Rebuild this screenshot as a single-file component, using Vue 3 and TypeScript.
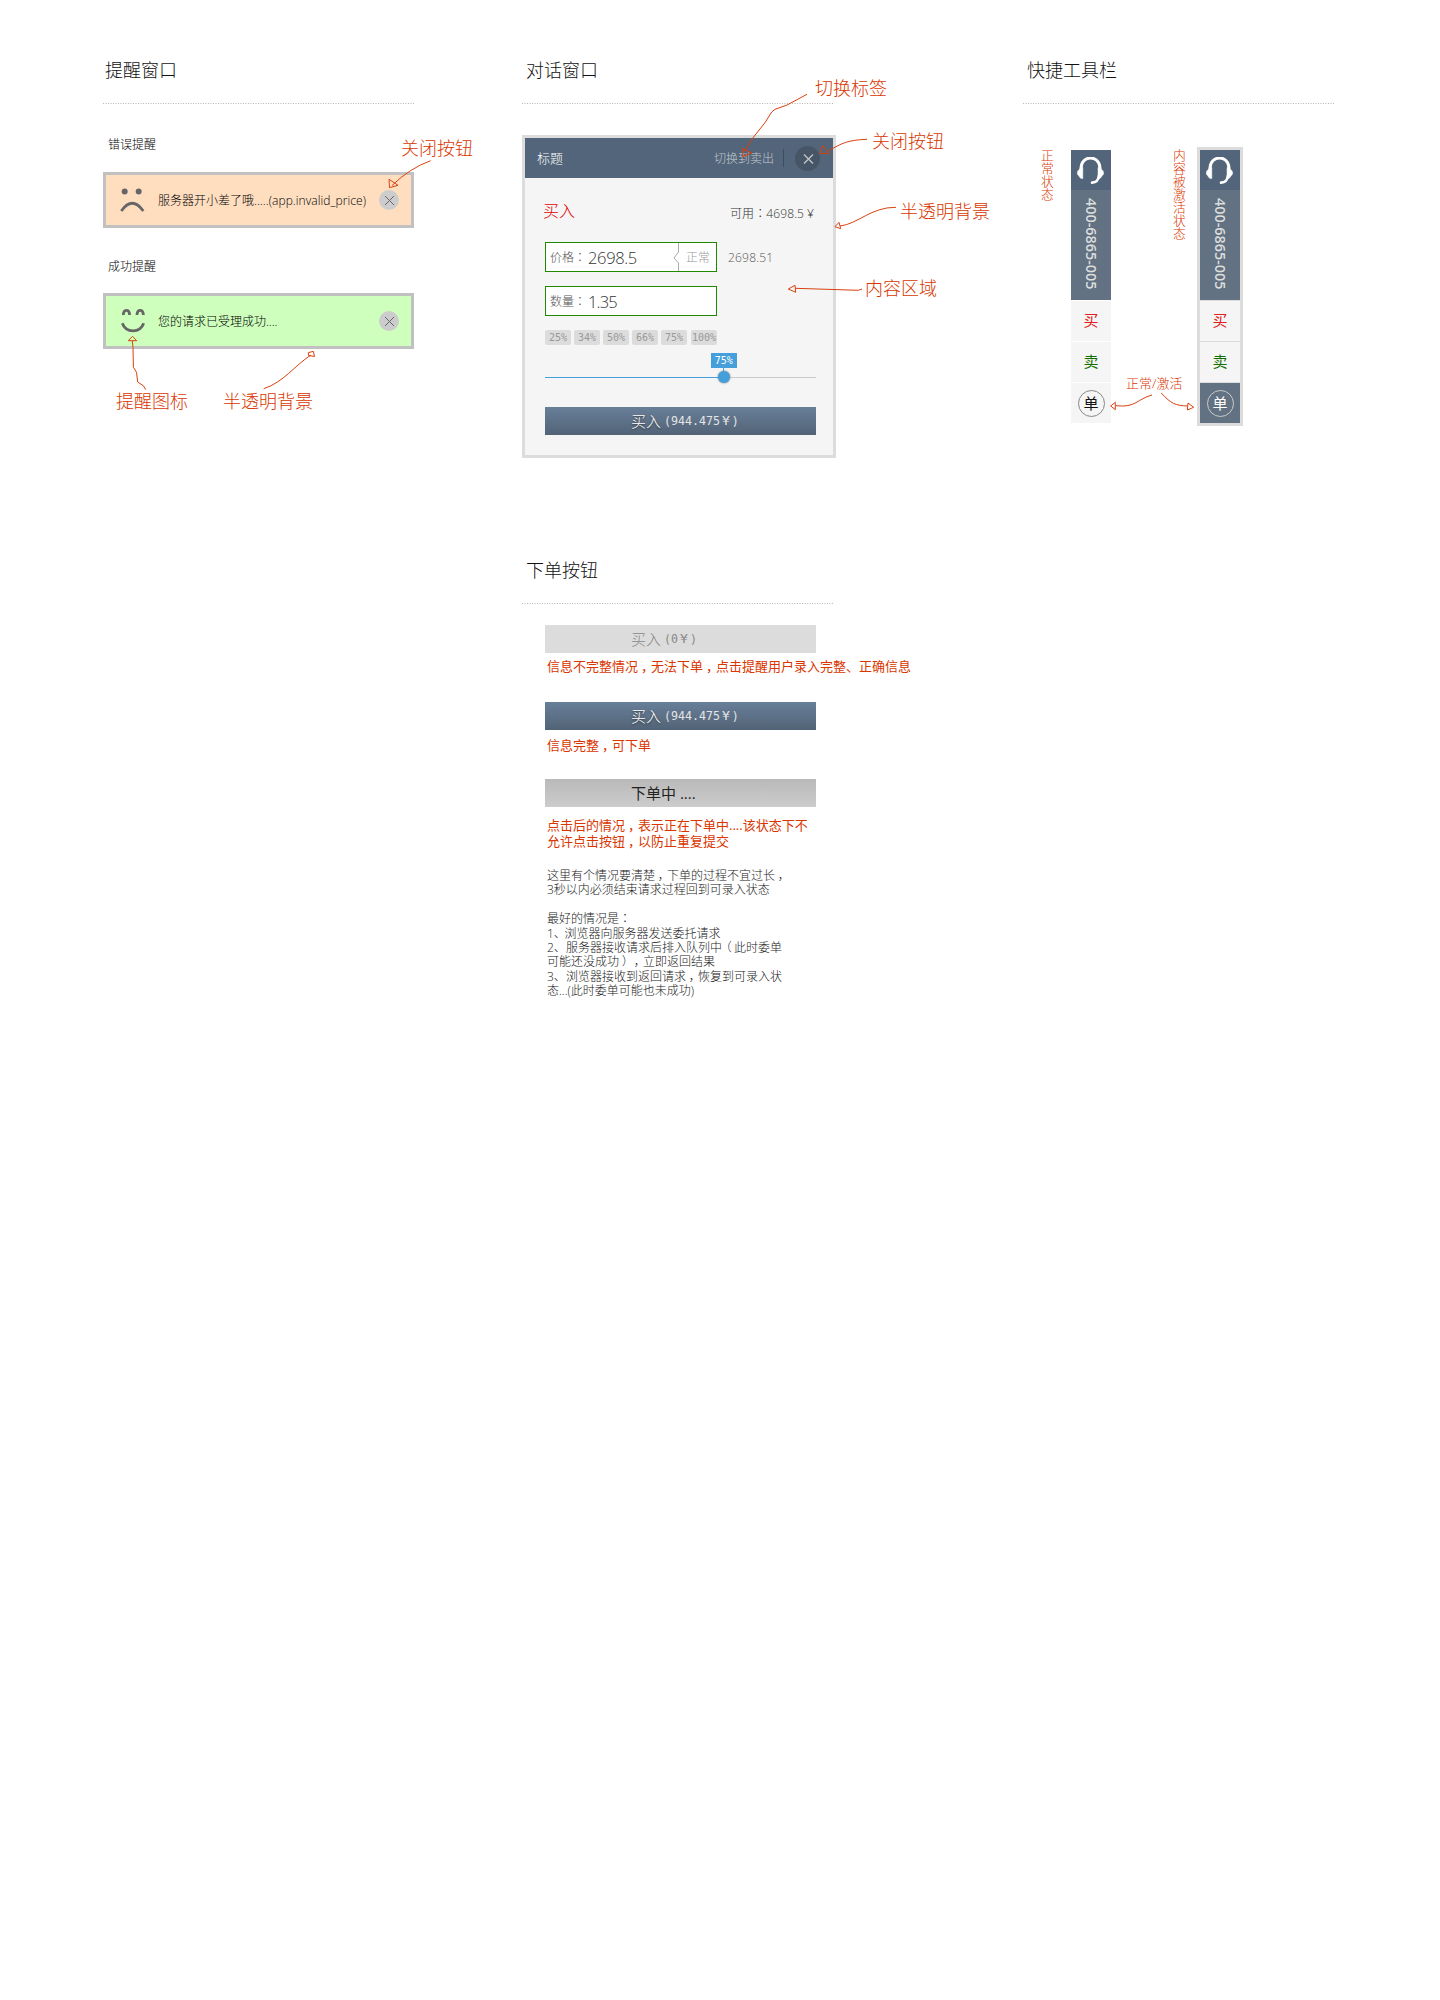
<script setup lang="ts">
interface Label { text: string; x: number; y: number; small?: boolean; vertical?: boolean }

const chips: string[] = ['25%', '34%', '50%', '66%', '75%', '100%']
const percent = 66

const labels: Label[] = [
  { text: '关闭按钮', x: 401, y: 148 },
  { text: '提醒图标', x: 116, y: 401 },
  { text: '半透明背景', x: 223, y: 401 },
  { text: '切换标签', x: 815, y: 88 },
  { text: '关闭按钮', x: 872, y: 141 },
  { text: '半透明背景', x: 900, y: 211 },
  { text: '内容区域', x: 865, y: 288 },
  { text: '正常/激活', x: 1126, y: 383, small: true },
  { text: '正常状态', x: 1041, y: 149, vertical: true },
  { text: '内容被激活状态', x: 1173, y: 149, vertical: true },
]

const arrows: string[] = [
  'M430.7 160.7Q410 168 392 185.5M389 179.3L398 185.3L389.5 187.6Z',
  'M145.7 389.7L143.3 385.7L137.7 382L136.5 372.3L133.4 367.3L133 347.3L132.3 341M132.5 336.3L136.7 340.7H128.3Z',
  'M263.7 388.7C284 382 294 366 311 355M308.3 352.7L313.3 351.3L314.5 356.5L308.5 355.5Z',
  'M807 94.3L786.7 105.2L775 109.3L771.7 112L765 122.7L753.3 137.3L744 151.7M742.3 148.3L751.7 153L742.7 156.7Z',
  'M867 139.3C848 140 842 143 828.3 151M822.7 145.5L829 153.5L819.7 153.3Z',
  'M896 207.3C871 207 858 224 840 226M835 226.7L839 222.3L840.7 228.7Z',
  'M862 289L858.3 290.3L795.3 288.3M788.3 289L795 285.3L795.7 292.3Z',
  'M1152 395C1137 399 1136 408 1116 405.7M1110.7 406L1115.3 402.3V409.7Z',
  'M1161.3 393C1171 404 1176 405.5 1187.3 406M1193.7 407.3L1188 403L1187.3 410Z',
]
</script>

<template>
  <main class="board">
    <section class="panel alerts">
      <h2>提醒窗口</h2>
      <h3>错误提醒</h3>
      <div class="alert error">
        <svg class="face" width="26" height="26" viewBox="0 0 26 26">
          <circle cx="4.7" cy="4.6" r="3" /><circle cx="18.7" cy="4.6" r="3" />
          <path d="M1.3 24Q12.2 8.5 23.3 24" />
        </svg>
        <span>服务器开小差了哦<i class="err">.....(app.invalid_price)</i></span>
        <button class="close"><svg width="20" height="20"><path d="M6 6L15 15M15 6L6 15" /></svg></button>
      </div>
      <h3 class="second">成功提醒</h3>
      <div class="alert ok">
        <svg class="face" width="26" height="26" viewBox="0 0 26 26">
          <path d="M3.3 7C3.5 0.8 9.3 0.8 9.6 7M17 7C17.3 0.8 23 0.8 23.4 7M2.3 15.3Q5 22.8 13 22.8T23.7 15.3" />
        </svg>
        <span>您的请求已受理成功....</span>
        <button class="close"><svg width="20" height="20"><path d="M6 6L15 15M15 6L6 15" /></svg></button>
      </div>
    </section>

    <div class="middle">
      <section class="panel dialogs">
        <h2>对话窗口</h2>
        <div class="dialog">
          <header>
            <b>标题</b><span class="switch">切换到卖出</span><i class="sep"></i>
            <button class="round"><svg width="25" height="25"><path d="M9 8.5L18 17.5M18 8.5L9 17.5" /></svg></button>
          </header>
          <div class="content">
            <div class="summary"><strong>买入</strong><span>可用<i class="mid">：</i>4698.5<i class="yen">¥</i></span></div>
            <div class="row">
              <div class="field">
                <label>价格<i class="mid">：</i></label><em>2698.5</em>
                <svg width="7" height="28"><path d="M5.5 0V9L1 15L5.5 20V28" /></svg>
                <span class="mode">正常</span>
              </div>
              <span class="hint">2698.51</span>
            </div>
            <div class="row qty"><div class="field"><label>数量<i class="mid">：</i></label><em class="tight">1.35</em></div></div>
            <div class="chips"><span v-for="c in chips" :key="c">{{ c }}</span></div>
            <div class="slider">
              <div class="fill" :style="{ width: percent + '%' }"></div>
              <div class="thumb" :style="{ left: percent + '%' }"><span>75%</span></div>
            </div>
            <div class="order primary"><span>买入</span><code>(944.475<i>¥</i>)</code></div>
          </div>
        </div>
      </section>

      <section class="panel states">
        <h2>下单按钮</h2>
        <div class="order disabled"><span>买入</span><code>(0<i>¥</i>)</code></div>
        <p class="note">信息不完整情况<i class="low">，</i>无法下单<i class="low">，</i>点击提醒用户录入完整、正确信息</p>
        <div class="order primary"><span>买入</span><code>(944.475<i>¥</i>)</code></div>
        <p class="note single">信息完整<i class="low">，</i>可下单</p>
        <div class="order pending"><span>下单中 ....</span></div>
        <p class="note two">点击后的情况<i class="low">，</i>表示正在下单中....该状态下不<br>允许点击按钮<i class="low">，</i>以防止重复提交</p>
        <p class="desc">这里有个情况要清楚<i class="low">，</i>下单的过程不宜过长<i class="low">，</i><br>3秒以内必须结束请求过程回到可录入状态<br><br>最好的情况是<i class="mid">：</i><br><i class="num one">1、</i>浏览器向服务器发送委托请求<br><i class="num">2、</i>服务器接收请求后排入队列中<i class="open">（</i>此时委单<br>可能还没成功<i class="low">）</i><i class="low">，</i>立即返回结果<br><i class="num">3、</i>浏览器接收到返回请求<i class="low">，</i>恢复到可录入状<br>态...(此时委单可能也未成功)</p>
      </section>
    </div>

    <section class="panel tools">
      <h2>快捷工具栏</h2>
      <div class="bars">
        <div v-for="n in 2" :key="n" class="bar" :class="{ active: n === 2 }">
          <div class="head">
            <svg width="28" height="28" viewBox="0 0 28 28">
              <path class="arc" d="M4 12.5V11C4.5 -2.3 22.5 -2.3 23 11V12.5" />
              <path class="cup" d="M5.8 10.6V21.5H4.4C2.8 21.5 2.4 19 .8 17.8Q-.2 16 .8 14C2.4 12.6 2.8 11 4.4 10.7ZM21 10.6V21.5H22.5C24 21.5 24.5 19 26.1 17.8Q27.1 16 26.1 14C24.5 12.6 24 11 22.5 10.7Z" />
              <path class="mic" d="M21.8 19C21.5 23 19.5 25.3 15 25.6" />
            </svg>
          </div>
          <div class="phone"><span>400-6865-005</span></div>
          <div class="cell buy">买</div>
          <div class="cell sell">卖</div>
          <div class="cell list"><span>单</span></div>
        </div>
      </div>
    </section>

    <div class="marks">
      <svg width="1440" height="480"><path v-for="(d, i) in arrows" :key="i" :d="d" /></svg>
      <span v-for="(l, i) in labels" :key="i" :class="{ small: l.small, vertical: l.vertical }" :style="{ left: l.x + 'px', top: l.y + 'px' }">{{ l.text }}</span>
    </div>
  </main>
</template>

<style>
body { margin: 0; background: #fff; }
</style>

<style scoped>
* { box-sizing: border-box; }
.board {
  position: relative; display: flex; align-items: flex-start; width: 1440px; height: 2000px; padding-left: 103px; overflow: hidden;
  font-family: "Open Sans", "Noto Sans CJK SC", sans-serif; font-weight: 300; font-size: 12px; color: #222;
  text-spacing-trim: space-all;
}
h2, h3, p { margin: 0; font-weight: 300; }
i, em { font-style: normal; }
button { padding: 0; border: 0; display: block; }
svg { display: block; flex: none; }
.mid { font-family: "Noto Sans CJK TC", sans-serif; line-height: 1; }
.low, .open { display: inline-block; width: 1em; line-height: 1; text-indent: .22em; white-space: nowrap; }
.open { text-indent: -.2em; }
h2 {
  width: 311px; height: 104px; padding: 55px 0 0 2px; font-size: 18px; line-height: 30px; color: #111;
  background: repeating-linear-gradient(90deg, #b8b8b8 0 1px, #fff 1px 2px, #d8d8d8 2px 4px, #fff 4px 5px) 0 100% / 100% 1px no-repeat;
}
.middle h2, .tools h2 { padding-left: 4px; }
.middle { margin-left: 108px; width: 501px; }
.alerts h3 { margin-top: 31px; padding-left: 5px; font-size: 12px; line-height: 20px; color: #000; }
.alerts h3.second { margin-top: 29px; }
.alert { display: flex; align-items: center; width: 311px; height: 56px; margin-top: 17px; border: 3px solid #c1c1c1; padding: 0 12px 0 14px; color: #000; }
.alerts .second + .alert { margin-top: 16px; }
.error { background: #ffdec0; }
.ok { background: #ceffbc; }
.alert span { margin-left: 12px; flex: 1; white-space: nowrap; }
.err { letter-spacing: .07px; }
.face { fill: #666; }
.face path { fill: none; stroke: #666; stroke-width: 2.8; }
.close { width: 20px; height: 20px; border-radius: 50%; background: #ccc; }
.close path { stroke: #666; fill: none; }

.dialogs { height: 500px; }
.dialog { width: 314px; height: 323px; margin-top: 31px; border: 3px solid #dcdcdc; background: #f5f5f5; }
.dialog header { display: flex; align-items: center; height: 40px; padding: 0 13px 0 12px; background: #52657a; color: #c3c8cd; }
.dialog b { font-weight: 300; font-size: 13px; color: #fff; flex: 1; padding-bottom: 1px; }
.sep { width: 1px; height: 18px; margin: 0 11px 0 9px; background: #414d59; }
.round { width: 25px; height: 25px; border-radius: 50%; background: #475666; }
.round path { stroke: #bfc4c8; stroke-width: 1.4; }
.content { padding: 19px 17px 0 20px; }
.summary { display: flex; justify-content: space-between; height: 45px; }
.summary strong { margin-left: -2px; font-size: 16px; line-height: 28px; font-weight: 300; color: #e00000; }
.summary span { line-height: 33px; color: #333; margin-right: 2px; letter-spacing: .1px; }
.yen { margin-left: 3px; }
.row { display: flex; align-items: center; }
.field { display: flex; align-items: center; width: 172px; height: 30px; padding-left: 4px; border: 1px solid #1f8a00; background: #fff; }
.field label { width: 38px; white-space: nowrap; color: #555; }
.field em { width: 85px; padding-top: 2px; font-size: 16.5px; letter-spacing: -.35px; color: #333; line-height: 28px; }
.field .tight { letter-spacing: -.8px; }
.field svg path { fill: none; stroke: #aaa; }
.mode { margin-left: 6px; color: #999; }
.hint { margin-left: 11px; color: #555; letter-spacing: .2px; }
.qty { margin-top: 14px; }
.chips { display: flex; gap: 3px; margin-top: 14px; }
.chips span { width: 26px; height: 15px; border-radius: 2px; background: #dcdcdc; font: 400 10px/15px "DejaVu Sans Mono", monospace; color: #999; text-align: center; }
.chips span:last-child { margin-left: 1px; }
.slider { position: relative; width: 271px; height: 1px; margin-top: 32px; background: #ccc; }
.fill { height: 1px; background: #459fdb; }
.thumb { position: absolute; top: -6px; width: 12px; height: 12px; margin-left: -6px; border-radius: 50%; background: #459fdb; box-shadow: 0 0 2px #666; }
.thumb::before { content: ""; position: absolute; left: 5px; top: -4px; width: 1px; height: 5px; background: #459fdb; }
.thumb span { position: absolute; left: -7px; top: -18px; width: 26px; height: 15px; background: #459fdb; color: #fff; font: 400 10px/15px "DejaVu Sans Mono", monospace; text-align: center; }
.order { display: flex; align-items: center; width: 271px; height: 28px; padding-left: 86px; font-size: 15px; line-height: 28px; }
.order span { margin-top: -1px; }
.order code { margin-left: 3px; font: 400 11.6px/28px "DejaVu Sans Mono", monospace; }
.order code i { display: inline-block; width: 12px; text-align: center; font-size: 13px; line-height: 20px; }
.content .order { margin-top: 29px; }
.primary { background: linear-gradient(#687f99, #526376); color: #fff; text-shadow: 0 1px 2px #333; }
.primary code { color: #e4e4e4; text-shadow: none; }
.disabled { background: #dcdcdc; color: #888; }
.pending { background: linear-gradient(#b9b9b9, #ccc); color: #222; font-weight: 400; }
.states .order, .states p { margin-left: 23px; }
.states .disabled { margin-top: 21px; }
.note { height: 49px; padding: 3px 0 0 2px; font-size: 13px; line-height: 20px; font-weight: 400; white-space: nowrap; color: #d93600; }
.note.single { padding-top: 5px; }
.note.two { height: 62px; padding-top: 11px; line-height: 15.6px; }
.desc { padding-left: 2px; line-height: 14.4px; white-space: nowrap; color: #222; }
.desc .num { display: inline-block; width: 19px; line-height: 1; }
.desc .one { width: 17.5px; }

.bars { display: flex; padding-left: 48px; margin-top: 43px; }
.bar { display: flex; flex-direction: column; gap: 1px; width: 40px; margin: 3px 86px 0 0; }
.bar.active { width: 46px; margin: 0; border: 3px solid #dcdcdc; background: #dcdcdc; }
.head { height: 40px; background: #52657a; padding: 7px 0 0 6px; }
.head path { fill: none; stroke: #fff; }
.head .arc { stroke-width: 3; }
.head .cup { fill: #fff; stroke: #fff; stroke-width: .5; }
.head .mic { stroke-width: 2.6; stroke-linecap: round; }
.phone { height: 110px; margin-top: -1px; background: #627282; color: #ddd; display: flex; align-items: center; justify-content: center; }
.phone span { writing-mode: vertical-rl; font-size: 14.4px; font-weight: 600; line-height: 20px; white-space: nowrap; padding-bottom: 2px; }
.cell { display: flex; align-items: center; justify-content: center; height: 40px; padding-bottom: 3px; background: #f5f5f5; font-size: 15px; font-weight: 400; }
.buy { color: #e02020; }
.sell { color: #137000; }
.list { padding-bottom: 0; }
.list span { width: 27px; height: 27px; border: 1px solid #888; border-radius: 50%; line-height: 24px; text-align: center; color: #111; }
.active .list { background: #627282; }
.active .list span { border-color: #ccc; color: #fff; }

.marks { position: absolute; inset: 0; color: #d93600; }
.marks path { fill: none; stroke: #d9410f; stroke-width: 1; }
.marks span { position: absolute; font-size: 18px; line-height: 30px; margin-top: -15px; white-space: nowrap; }
.marks .small { font-size: 13px; }
.marks .vertical { width: 13px; margin: 0; font-size: 12.8px; line-height: 13px; white-space: normal; word-break: break-all; }
</style>
